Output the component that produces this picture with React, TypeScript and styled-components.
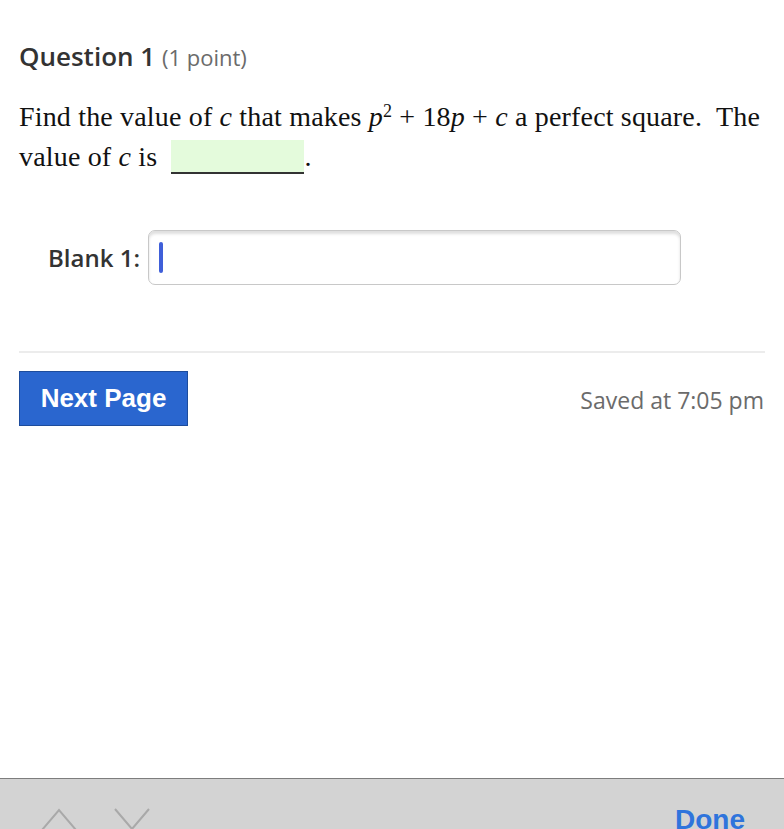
import React from "react";
import styled, { createGlobalStyle } from "styled-components";

const Global = createGlobalStyle`
  html, body { margin: 0; padding: 0; background: #fff; }
  body { font-family: "Open Sans", "Liberation Sans", sans-serif; color: #333; }
`;

const Screen = styled.div`
  height: 829px;
  display: flex;
  flex-direction: column;
  overflow: hidden;
`;

const Content = styled.main`
  flex: 1;
  padding: 37px 19px 0 19px;
`;

const Heading = styled.h1`
  margin: 0;
  font-size: 26px;
  font-weight: 600;
  color: #333;
  line-height: 38px;
`;

const Points = styled.span`
  font-size: 22px;
  font-weight: 400;
  color: #6b6b6b;
`;

const Prompt = styled.p`
  margin: 21px 0 0 0;
  font-family: "Liberation Serif", "Times New Roman", serif;
  font-size: 28px;
  line-height: 40px;
  letter-spacing: 0.17px;
  color: #111;
`;

const Var = styled.i`
  font-style: italic;
`;

const Sup = styled.sup`
  font-size: 18px;
  line-height: 0;
  vertical-align: 9px;
`;

const BlankBox = styled.span`
  display: inline-block;
  width: 133px;
  height: 32px;
  margin-left: 7px;
  vertical-align: -8px;
  background: #e4fbdc;
  border-bottom: 2px solid #333;
`;

const BlankRow = styled.div`
  display: flex;
  align-items: center;
  gap: 8px;
  margin-top: 53px;
  padding-left: 29px;
`;

const BlankLabel = styled.label`
  font-size: 24px;
  font-weight: 600;
  color: #333;
`;

const InputBox = styled.div`
  width: 521px;
  height: 53px;
  border: 1px solid #c8c8c8;
  border-radius: 7px;
  box-shadow: inset 0 3px 3px rgba(0, 0, 0, 0.13);
  display: flex;
  align-items: center;
  padding-left: 10px;
  box-sizing: content-box;
`;

const Caret = styled.span`
  width: 4px;
  height: 31px;
  border-radius: 2px;
  background: #3f5fd9;
`;

const Divider = styled.hr`
  margin: 66px 0 0 0;
  border: none;
  border-top: 2px solid #ececec;
`;

const Footer = styled.div`
  display: flex;
  justify-content: space-between;
  align-items: center;
  margin-top: 18px;
`;

const NextButton = styled.button`
  width: 169px;
  height: 55px;
  background: #2a66cf;
  border: 1px solid #1d4c9c;
  color: #fff;
  font-family: "Liberation Sans", Arial, sans-serif;
  font-weight: 700;
  font-size: 26px;
  padding: 0;
  cursor: pointer;
`;

const Saved = styled.span`
  font-size: 23px;
  color: #6b6b6b;
  margin-right: 1px;
  padding-top: 2px;
`;

const Accessory = styled.div`
  height: 50px;
  flex: none;
  border-top: 1px solid #7d7d7d;
  background: #d3d3d3;
  display: flex;
  align-items: flex-start;
  justify-content: space-between;
  padding: 0 39px 0 41px;
  overflow: hidden;
`;

const Arrows = styled.div`
  display: flex;
  gap: 37px;
  padding-top: 29px;
`;

const Done = styled.span`
  font-family: "Liberation Sans", Arial, sans-serif;
  font-weight: 700;
  font-size: 28px;
  line-height: 32px;
  color: #2f74dc;
  padding-top: 25px;
`;

export default function App() {
  return (
    <Screen>
      <Global />
      <Content>
        <Heading>
          Question 1 <Points>(1 point)</Points>
        </Heading>
        <Prompt>
          Find the value of <Var>c</Var> that makes <Var>p</Var>
          <Sup>2</Sup> + 18<Var>p</Var> + <Var>c</Var> a perfect square.&nbsp; The value of{" "}
          <Var>c</Var> is <BlankBox />.
        </Prompt>
        <BlankRow>
          <BlankLabel>Blank 1:</BlankLabel>
          <InputBox>
            <Caret />
          </InputBox>
        </BlankRow>
        <Divider />
        <Footer>
          <NextButton>Next Page</NextButton>
          <Saved>Saved at 7:05 pm</Saved>
        </Footer>
      </Content>
      <Accessory>
        <Arrows>
          <svg width="36" height="22" viewBox="0 0 36 22">
            <polyline points="1,22 18,2 35,22" fill="none" stroke="#a9a9a9" strokeWidth="2" />
          </svg>
          <svg width="36" height="22" viewBox="0 0 36 22">
            <polyline points="1,1 18,21 35,1" fill="none" stroke="#a9a9a9" strokeWidth="2" />
          </svg>
        </Arrows>
        <Done>Done</Done>
      </Accessory>
    </Screen>
  );
}
